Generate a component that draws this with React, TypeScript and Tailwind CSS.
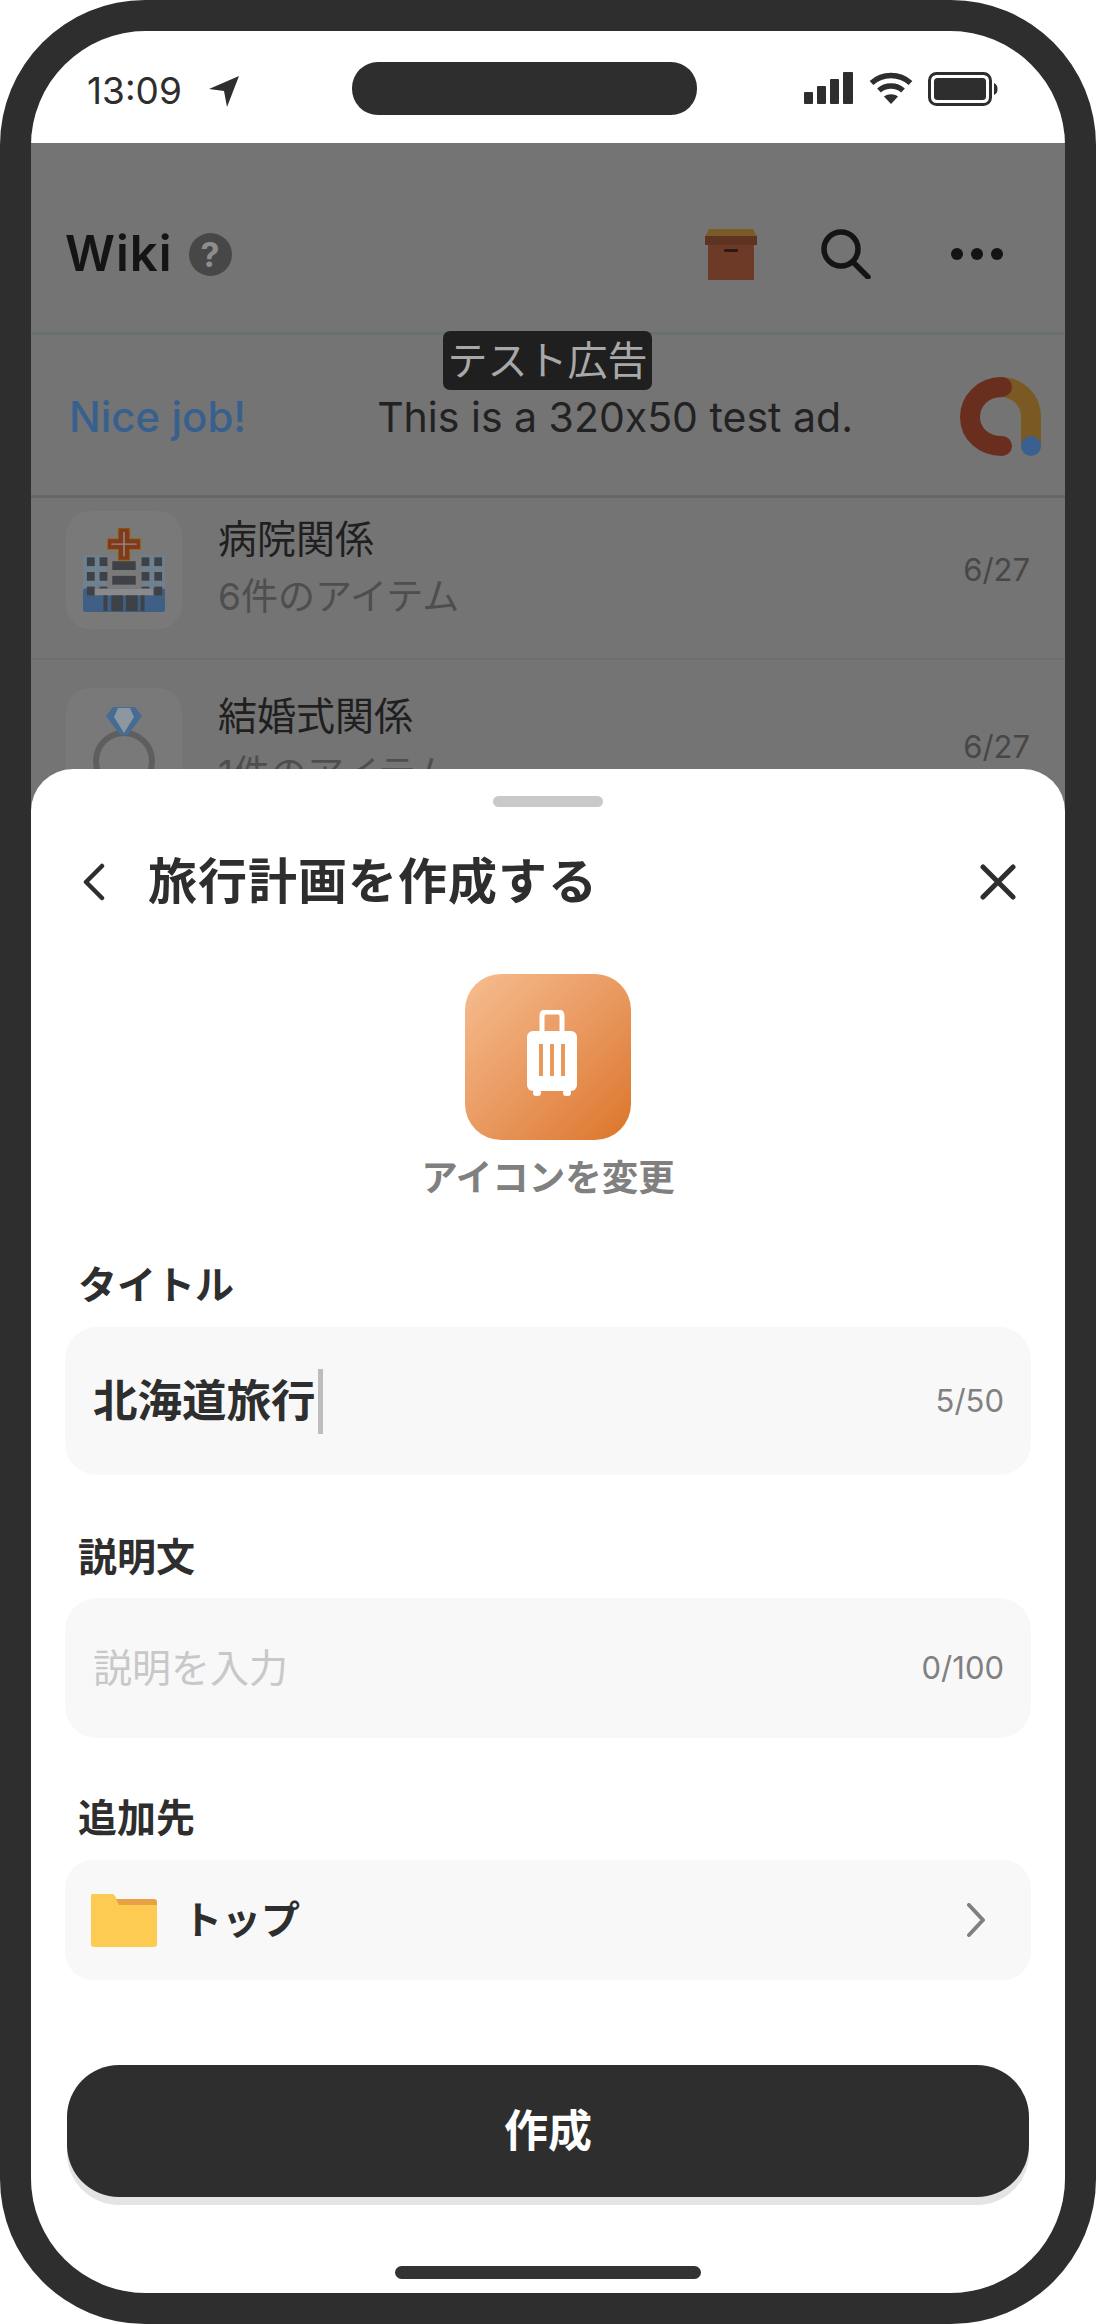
import React from "react";

const jp = "font-['Inter','Noto_Sans_CJK_JP','Noto_Sans',sans-serif]";

function Signal() {
  return (
    <svg width="50" height="32" viewBox="0 0 50 32" fill="#2e2e2e">
      <rect x="0" y="20" width="9" height="12" rx="1" />
      <rect x="13" y="14" width="9" height="18" rx="1" />
      <rect x="26" y="7" width="9" height="25" rx="1" />
      <rect x="39" y="0" width="10" height="32" rx="1" />
    </svg>
  );
}

function Wifi() {
  return (
    <svg width="44" height="32" viewBox="0 0 44 32" fill="none" stroke="#2e2e2e" strokeWidth="5.5">
      <path d="M2.5 11C13.5 1 30.5 1 41.5 11" />
      <path d="M10 18.5C16.5 12.5 27.5 12.5 34 18.5" />
      <path d="M22 32L15 24.5C19 21.5 25 21.5 29 24.5Z" fill="#2e2e2e" stroke="none" />
    </svg>
  );
}

function Battery() {
  return (
    <svg width="70" height="34" viewBox="0 0 70 34" fill="none">
      <rect x="1.5" y="1.5" width="61" height="31" rx="7" stroke="#2e2e2e" strokeWidth="3" />
      <rect x="6" y="6" width="52" height="22" rx="3.5" fill="#2e2e2e" />
      <path d="M66 11C69 12.5 69.5 14.5 69.5 17C69.5 19.5 69 21.5 66 23Z" fill="#2e2e2e" />
    </svg>
  );
}

function Box() {
  return (
    <svg width="52" height="51" viewBox="0 0 52 51">
      <path d="M4 0H48L52 8H0Z" fill="#7a5a26" />
      <rect x="0" y="7" width="52" height="9" fill="#5e3322" />
      <rect x="3" y="16" width="46" height="35" fill="#6c3a27" />
      <rect x="19" y="20" width="14" height="3" rx="1" fill="#2a1a12" />
    </svg>
  );
}

function AdLogo() {
  return (
    <svg width="82" height="82" viewBox="0 0 82 82" fill="none">
      <path d="M40 11C58 11 71 24 71 41V68" stroke="#7a5a22" strokeWidth="20" strokeLinecap="round" />
      <path d="M42 11C22 11 10 26 10 41C10 58 24 70 42 70" stroke="#6a2e1e" strokeWidth="20" strokeLinecap="round" />
      <circle cx="71" cy="70" r="10" fill="#3a6090" />
    </svg>
  );
}

function Hospital() {
  const windows = [0, 15, 30];
  return (
    <svg width="84" height="84" viewBox="0 0 86 86">
      <rect x="1" y="28" width="84" height="58" fill="#6f808f" />
      <rect x="25" y="26" width="36" height="60" fill="#7a7a7a" />
      <rect x="1" y="62" width="84" height="24" rx="2" fill="#3f5f85" />
      <path d="M37 0H49V11H60V22H49V33H37V22H26V11H37Z" fill="#7f3a1c" stroke="#97691d" strokeWidth="1" />
      <path d="M43 4V29M30 16.500H56" stroke="#998a88" strokeWidth="1.500" />
      {windows.map((y) => (
        <g key={y} fill="#3e4145">
          <rect x="5" y={20 + y + 10} width="8" height="9" />
          <rect x="18" y={20 + y + 10} width="8" height="9" />
          <rect x="61" y={20 + y + 10} width="8" height="9" />
          <rect x="74" y={20 + y + 10} width="8" height="9" />
        </g>
      ))}
      <rect x="31" y="34" width="24" height="9" fill="#3e4145" />
      <rect x="31" y="49" width="24" height="9" fill="#3e4145" />
      <rect x="13" y="62" width="60" height="7" fill="#8a8a8a" />
      <g fill="#3e4145">
        <rect x="22" y="69" width="4" height="16" />
        <rect x="30" y="69" width="12" height="16" />
        <rect x="45" y="69" width="12" height="16" />
        <rect x="60" y="69" width="4" height="16" />
      </g>
    </svg>
  );
}

function Ring() {
  return (
    <svg width="64" height="88" viewBox="0 0 64 88" fill="none">
      <circle cx="32" cy="54" r="28" stroke="#5e5e5e" strokeWidth="6" />
      <path d="M21 0H43L50 9L36 28H28L14 9Z" fill="#466c94" />
      <path d="M26 1H38L42 10L32 26L22 10Z" fill="#8d979f" />
    </svg>
  );
}

function Suitcase() {
  return (
    <svg width="52" height="86" viewBox="0 0 52 86" fill="none">
      <path d="M16 23V6C16 3.500 17.500 2 20 2H32C34.500 2 36 3.500 36 6V23" stroke="#fff" strokeWidth="5" />
      <rect x="1" y="21" width="50" height="60" rx="6" fill="#fff" />
      <rect x="13" y="34" width="4" height="32" fill="#e89a5c" />
      <rect x="24" y="34" width="4" height="32" fill="#e89a5c" />
      <rect x="35" y="34" width="4" height="32" fill="#e89a5c" />
      <rect x="7" y="80" width="8" height="6" rx="3" fill="#fff" />
      <rect x="37" y="80" width="8" height="6" rx="3" fill="#fff" />
    </svg>
  );
}

function Folder() {
  return (
    <svg width="66" height="53" viewBox="0 0 66 53">
      <path d="M3 0H20C23 0 24 2 25 5H63C65 5 66 6 66 8V20H0V3C0 1 1 0 3 0Z" fill="#e9a243" />
      <path d="M0 3C0 1 1 0 3 0H20C23 0 24 2 25 5L28 11H66V50C66 52 65 53 63 53H3C1 53 0 52 0 50Z" fill="#fdcb52" />
    </svg>
  );
}

function Label({ children, className }: { children: React.ReactNode; className: string }) {
  return (
    <div className={`pl-[47px] text-[39px] leading-[50px] font-bold text-[#2e2e2e] ${className}`}>{children}</div>
  );
}

function ListRow({
  icon,
  title,
  sub,
  className,
}: {
  icon: React.ReactNode;
  title: string;
  sub: string;
  className: string;
}) {
  return (
    <div className={`flex items-start pl-[35px] pr-[35px] ${className}`}>
      <div className="flex h-[118px] w-[116px] shrink-0 items-center justify-center rounded-[24px] bg-[#797979]">
        {icon}
      </div>
      <div className="ml-[36px] flex-1 pt-[3px]">
        <div className="text-[39px] leading-[50px] text-[#1f1f1f]">{title}</div>
        <div className="mt-[8px] text-[37px] leading-[50px] text-[#4e4e4e]">{sub}</div>
      </div>
      <div className="mt-[39px] text-[31px] leading-[40px] text-[#474747]">6/27</div>
    </div>
  );
}

export default function App() {
  return (
    <div className="h-[2324px] w-[1096px] bg-white">
      <div className={`h-[2324px] w-[1096px] rounded-[145px] bg-[#2e2e2e] p-[31px] ${jp}`}>
        <div className="relative h-[2262px] w-[1034px] overflow-hidden rounded-[115px] bg-[#747474]">
          {/* status bar */}
          <div className="flex h-[112px] items-start bg-white pl-[56px] pr-[67px] pt-[31px] text-[#2e2e2e]">
            <div className="mt-[2px] w-[122px] text-[37px] leading-[54px] font-normal">13:09</div>
            <svg className="mt-[14px]" width="30" height="31" viewBox="0 0 30 31" fill="#2e2e2e">
              <path d="M30 0L18 31L15 15L0 13Z" />
            </svg>
            <div className="ml-[113px] h-[53px] w-[345px] rounded-[26px] bg-[#2e2e2e]" />
            <div className="ml-auto mt-[10px] flex items-start gap-[15px]">
              <Signal />
              <Wifi />
              <Battery />
            </div>
          </div>

          {/* page header */}
          <div className="flex h-[192px] items-center border-b-[3px] border-[#687070] pl-[34px] pr-[62px] pt-[33px]">
            <div className="text-[49px] leading-[56px] font-semibold tracking-[1px] text-[#141414]">Wiki</div>
            <div className="ml-[16px] flex h-[43px] w-[43px] items-center justify-center rounded-full bg-[#474747] text-[34px] font-bold text-[#8d8d8d]">
              ?
            </div>
            <div className="ml-auto">
              <Box />
            </div>
            <svg className="ml-[64px]" width="50" height="50" viewBox="0 0 50 50" fill="none" stroke="#141414" strokeWidth="5.500" strokeLinecap="round">
              <circle cx="20" cy="20" r="17" />
              <path d="M32 33L47 48" />
            </svg>
            <div className="ml-[80px] flex gap-[8px]">
              <div className="h-[12px] w-[12px] rounded-full bg-[#141414]" />
              <div className="h-[12px] w-[12px] rounded-full bg-[#141414]" />
              <div className="h-[12px] w-[12px] rounded-full bg-[#141414]" />
            </div>
          </div>

          {/* test ad */}
          <div className="relative flex h-[163px] items-center border-b-[3px] border-[#666666] pl-[38px] pr-[23px] pt-[3px] [font-feature-settings:'calt'_0]">
            <div className="absolute left-[412px] top-[-4px] flex h-[59px] w-[209px] items-center justify-center rounded-[7px] bg-[#1f1f1f] text-[40px] leading-none text-[#a8a8a8]">
              テスト広告
            </div>
            <div className="text-[42px] font-medium leading-[50px] text-[#38608f]">Nice job!</div>
            <div className="ml-[131px] whitespace-nowrap text-[41px] leading-[50px] text-[#222222]">
              This is a 320x50 test ad.
            </div>
            <div className="ml-auto">
              <AdLogo />
            </div>
          </div>

          {/* list behind the sheet */}
          <ListRow
            icon={<Hospital />}
            title="病院関係"
            sub="6件のアイテム"
            className="h-[162px] border-b-[2px] border-[#6e6e6e] pt-[13px]"
          />
          <ListRow icon={<div className="pt-[8px]"><Ring /></div>} title="結婚式関係" sub="1件のアイテム" className="pt-[28px]" />

          {/* bottom sheet */}
          <div className="absolute inset-x-0 bottom-0 h-[1524px] rounded-t-[42px] bg-white pt-[27px]">
            <div className="mx-auto h-[11px] w-[110px] rounded-full bg-[#c9c9c9]" />

            <div className="mt-[40px] flex h-[70px] items-center pl-[51px] pr-[49px]">
              <svg width="24" height="38" viewBox="0 0 24 38" fill="none" stroke="#2e2e2e" strokeWidth="4.500" strokeLinecap="round" strokeLinejoin="round">
                <path d="M20 3L4 19L20 35" />
              </svg>
              <div className="ml-[42px] text-[49px] leading-[70px] font-bold tracking-[1px] text-[#2e2e2e]">
                旅行計画を作成する
              </div>
              <svg className="ml-auto" width="36" height="36" viewBox="0 0 36 36" fill="none" stroke="#2e2e2e" strokeWidth="5" strokeLinecap="round">
                <path d="M3 3L33 33M33 3L3 33" />
              </svg>
            </div>

            <div className="mx-auto mt-[57px] flex h-[166px] w-[166px] items-center justify-center rounded-[36px] bg-gradient-to-br from-[#f6bd90] to-[#db7526] pb-[8px] pl-[8px]">
              <Suitcase />
            </div>
            <div className="mt-[13px] text-center text-[36.500px] leading-[50px] font-bold text-[#808080]">
              アイコンを変更
            </div>

            <Label className="mt-[57px]">タイトル</Label>
            <div className="mx-[34px] mt-[17px] flex h-[148px] items-center rounded-[32px] bg-[#f8f8f8] pl-[28px] pr-[27px]">
              <div className="text-[44.500px] leading-[60px] font-bold text-[#2e2e2e]">北海道旅行</div>
              <div className="ml-[2px] h-[65px] w-[5px] bg-[#bdbdbd]" />
              <div className="ml-auto text-[31px] leading-[40px] text-[#808080]">5/50</div>
            </div>

            <Label className="mt-[57px]">説明文</Label>
            <div className="mx-[34px] mt-[16px] flex h-[140px] items-center rounded-[32px] bg-[#f8f8f8] pl-[28px] pr-[27px]">
              <div className="text-[39px] leading-[60px] text-[#c8c8c8]">説明を入力</div>
              <div className="ml-auto text-[31px] leading-[40px] text-[#808080]">0/100</div>
            </div>

            <Label className="mt-[55px]">追加先</Label>
            <div className="mx-[34px] mt-[17px] flex h-[120px] items-center rounded-[28px] bg-[#f8f8f8] pl-[26px] pr-[45px]">
              <Folder />
              <div className="ml-[26px] text-[39px] leading-[50px] font-semibold text-[#2e2e2e]">トップ</div>
              <svg className="ml-auto" width="20" height="34" viewBox="0 0 20 34" fill="none" stroke="#808080" strokeWidth="4" strokeLinecap="round" strokeLinejoin="round">
                <path d="M3 2L17 17L3 32" />
              </svg>
            </div>

            <div className="mx-[36px] mt-[85px] flex h-[132px] items-center justify-center rounded-[52px] bg-[#2e2e2e] text-[44px] font-bold text-white shadow-[0_8px_0_#e4e4e4]">
              作成
            </div>

            <div className="mx-auto mt-[69px] h-[13px] w-[306px] rounded-full bg-[#333333]" />
          </div>
        </div>
      </div>
    </div>
  );
}
